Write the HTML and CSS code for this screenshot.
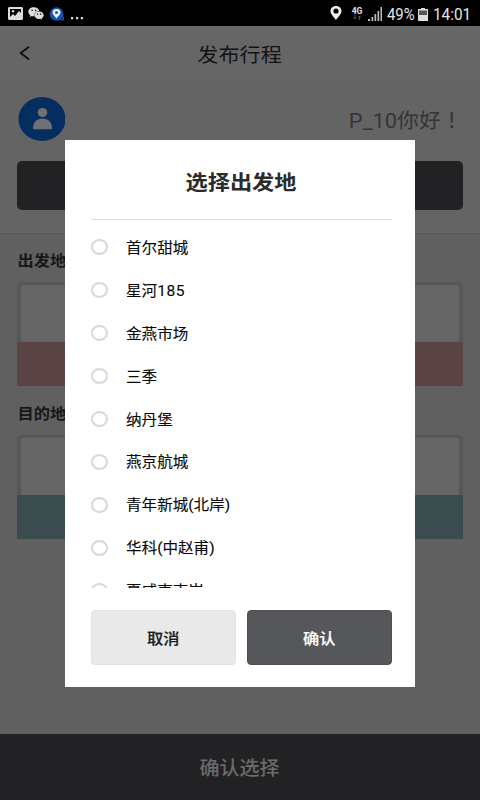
FILE: index.html
```html
<!DOCTYPE html>
<html lang="zh-CN">
<head>
<meta charset="utf-8">
<title>发布行程</title>
<link rel="stylesheet" href="styles.css">
</head>
<body>
<div class="phone">
  <div class="status">
    <div class="status-left">
      <svg width="15" height="13" viewBox="0 0 15 13"><path fill="#ddd" fill-rule="evenodd" d="M1 0h13l1 1v11l-1 1H1l-1-1V1zM2 2v8l3-3 2 2 4-5 2 2V2z"/><circle cx="5" cy="4.3" r="1.2" fill="#ddd"/></svg>
      <svg width="16" height="13" viewBox="0 0 16 13"><path fill="#ddd" d="M5.8.2C2.600.2.3 2.200.3 4.700c0 1.500.8 2.600 2 3.500l-.5 1.800 2-1c1 .3 1.800.3 2.700.2C6 6 8 4 11.300 3.900 10.800 1.800 8.600.2 5.800.2z"/><path fill="#ddd" d="M11 4.500c-2.700 0-4.500 1.700-4.500 3.700s2 3.700 4.500 3.700l1.500-.2 1.700 1-.4-1.500c1.200-.8 1.900-1.800 1.900-3 0-2-2-3.700-4.700-3.700z"/><path fill="#000" d="M3.500 2.700h1.300v1.300H3.500zM7 2.700h1.300v1.300H7zM9 6.500h1.200v1.200H9zM12 6.500h1.200v1.200H12z"/></svg>
      <svg width="16" height="14" viewBox="0 0 16 14"><circle cx="7.500" cy="7" r="6.800" fill="#1354b0"/><path fill="#eef" fill-rule="evenodd" d="M7.500 2C5 2 3.500 3.500 3.500 5.500S6 9.500 7.500 11.500c1.500-2 4-4 4-6S10 2 7.500 2zm0 2a1.500 1.500 0 1 1 0 3 1.500 1.500 0 0 1 0-3z"/><path d="M11.500 10h3v3h-3z" fill="#001b4d" stroke="#1460c8"/></svg>
      <svg width="13" height="13" viewBox="0 0 13 13"><path fill="#ddd" d="M1 10h2.200v2.200H1zM6 10h2.200v2.200H6zM10.800 10H13v2.200h-2.200z"/></svg>
    </div>
    <div class="status-right">
      <svg class="pin" width="12" height="14" viewBox="0 0 12 14"><path fill="#eee" fill-rule="evenodd" d="M6 0C2.500 0 .5 2.300.5 5.200.5 8 4 11 6 14c2-3 5.500-6 5.500-8.800C11.500 2.300 9.500 0 6 0zm0 2.400a2.600 2.600 0 1 1 0 5.200 2.600 2.600 0 0 1 0-5.200z"/></svg>
      <div class="net"><span>4G</span><svg width="9" height="5" viewBox="0 0 9 5"><path stroke="#555" fill="none" d="M2 0v4M.5 2.500 2 4l1.500-1.500M6.500 5V1M5 2.500 6.500 1 8 2.500"/></svg></div>
      <svg class="signal" width="15" height="14" viewBox="0 0 15 14"><path fill="#bbb" d="M0 12h2v2H0zM3.500 10h1.700v4H3.500zM6.500 7h1.700v7H6.500zM9.500 4h1.700v10H9.500zM12.500 0H14v14h-1.500z"/></svg>
      <span class="clock pct">49%</span>
      <svg class="battery" width="10" height="13" viewBox="0 0 10 13"><path fill="#555" d="M0 1h10v12H0z"/><path fill="#ddd" d="M3 0h4v1h3v12H0V1h3zM1 2.500V7h8V2.500z" fill-rule="evenodd"/></svg>
      <span class="clock">14:01</span>
    </div>
  </div>
  <header class="header">
    <svg class="back" width="12" height="16" viewBox="0 0 12 16"><path d="M11 1.700 2.700 8 11 14.500" fill="none" stroke="#111" stroke-width="1.900"/></svg>
    <h1><span class="wide">发布行程</span></h1>
  </header>
  <section class="profile">
    <div class="user">
      <svg width="48" height="44" viewBox="0 0 48 44"><ellipse cx="25" cy="22" rx="23.500" ry="22" fill="#042e60"/><ellipse cx="25.500" cy="15.500" rx="4.800" ry="4.500" fill="#717173"/><path d="M16 31.500c0-6.500 4-10 9.500-10S35 25 35 31.500q0 .7-1 .7H17q-1 0-1-.7z" fill="#717173"/></svg>
      <p class="hello" lang="zh-TW">P_10你好！</p>
    </div>
    <div class="banner"></div>
  </section>
  <main class="trip">
    <h2><span class="wide">出发地</span></h2>
    <div class="place"><div class="place-bar from"></div></div>
    <h2><span class="wide">目的地</span></h2>
    <div class="place"><div class="place-bar to"></div></div>
  </main>
  <footer class="submit"><span class="wide">确认选择</span></footer>
  <div class="modal">
    <h3><span class="wide">选择出发地</span></h3>
    <ul class="options">
      <li><i></i><span>首尔甜城</span></li>
      <li><i></i><span>星河<b>185</b></span></li>
      <li><i></i><span>金燕市场</span></li>
      <li><i></i><span>三季</span></li>
      <li><i></i><span>纳丹堡</span></li>
      <li><i></i><span>燕京航城</span></li>
      <li><i></i><span>青年新城(北岸)</span></li>
      <li><i></i><span>华科(中赵甫)</span></li>
      <li><i></i><span>夏威夷南岸</span></li>
    </ul>
    <div class="actions">
      <button class="cancel"><span class="wide">取消</span></button>
      <button class="ok"><span class="wide">确认</span></button>
    </div>
  </div>
</div>
</body>
</html>
```
FILE: styles.css
```css
* { box-sizing: border-box; margin: 0; padding: 0; }
body { font-family: Roboto, "Noto Sans CJK SC", sans-serif; }
svg { display: block; }
.wide { display: inline-block; transform: scaleX(1.067); }
.phone { position: relative; width: 480px; height: 800px; background: #606060; display: flex; flex-direction: column; overflow: hidden; }
.status { height: 26px; background: #000; display: flex; justify-content: space-between; padding: 0 10px 0 8px; flex: none; }
.status-left { display: flex; gap: 5px; align-items: center; padding-top: 1px; }
.status-right { display: flex; align-items: center; color: #e4e4e4; }
.pin { margin-right: 9px; }
.net { width: 12px; display: flex; flex-direction: column; align-items: center; font: 700 8.500px/8px Roboto, sans-serif; }
.signal { margin: 2px 0 0 5px; }
.clock { font-size: 16.500px; line-height: 26px; padding-top: 3px; width: 37px; white-space: nowrap; transform: scaleX(.93); transform-origin: left; }
.pct { margin-left: 4px; width: 27px; transform: scaleX(.9); }
.battery { margin: 2px 5px 0 4px; }
.header { height: 54px; background: #666; display: flex; align-items: center; padding: 0 18px; flex: none; }
.header h1 { flex: 1; text-align: center; font-size: 19.800px; font-weight: 400; color: #131313; margin-right: 12px; }
.profile { height: 153px; background: #646464; padding: 17px 17px 0; flex: none; }
.user { display: flex; justify-content: space-between; align-items: center; height: 44px; }
.hello { font-family: Roboto, "Noto Sans CJK TC", sans-serif; font-size: 20.500px; color: #353535; transform: scaleX(1.067); transform-origin: right; }
.banner { height: 49px; margin-top: 20px; border-radius: 5px; background: #222224; }
.trip { padding: 15px 17px 0; flex: 1; border-top: 1px solid #595959; }
.trip h2 { height: 24px; line-height: 24px; font-size: 15.200px; font-weight: 600; color: #171717; margin-bottom: 9px; padding-left: 2px; }
.place { height: 104px; border: solid #575757; border-width: 3px 4px 0; border-radius: 5px 5px 0 0; background: #666; display: flex; align-items: flex-end; margin-bottom: 16px; }
.place-bar { flex: 1; height: 44px; margin: 0 -4px; }
.from { background: #5a4345; }
.to { background: #3a4c4d; }
.submit { height: 66px; background: #222224; color: #6b6b6b; font-size: 18.800px; font-weight: 500; display: flex; align-items: center; justify-content: center; padding-bottom: 2px; flex: none; }
.modal { position: absolute; left: 65px; top: 140px; width: 350px; height: 547px; background: #fff; padding: 0 23px 0 25.500px; }
.modal h3 { height: 80px; border-bottom: 1px solid #dedede; text-align: center; font-size: 20.800px; font-weight: 600; line-height: 86px; color: #2b2b2b; }
.options { list-style: none; height: 368px; overflow: hidden; padding-top: 6px; }
.options li { height: 42.900px; display: flex; align-items: center; font-size: 14.600px; color: #080808; }
.options i { width: 17.500px; height: 16px; border: 2px solid #d9d9d9; border-radius: 50%; margin-right: 17.500px; }
.options span { display: inline-block; padding-bottom: 2px; transform: scaleX(1.067); transform-origin: left; -webkit-text-stroke: .1px; }
.options b { font-weight: 400; letter-spacing: .5px; }
.actions { display: flex; gap: 11.500px; margin-top: 22px; }
.actions button { flex: 1; height: 55px; padding-bottom: 2px; border: 1px solid #e3e3e3; border-radius: 4px; background: #e9e9e9; font: 500 15.200px "Noto Sans CJK SC", sans-serif; -webkit-text-stroke: .2px; color: #1c1c1c; }
.actions .ok { background: #55575a; border-color: #4e5053; color: #fff; }
```
